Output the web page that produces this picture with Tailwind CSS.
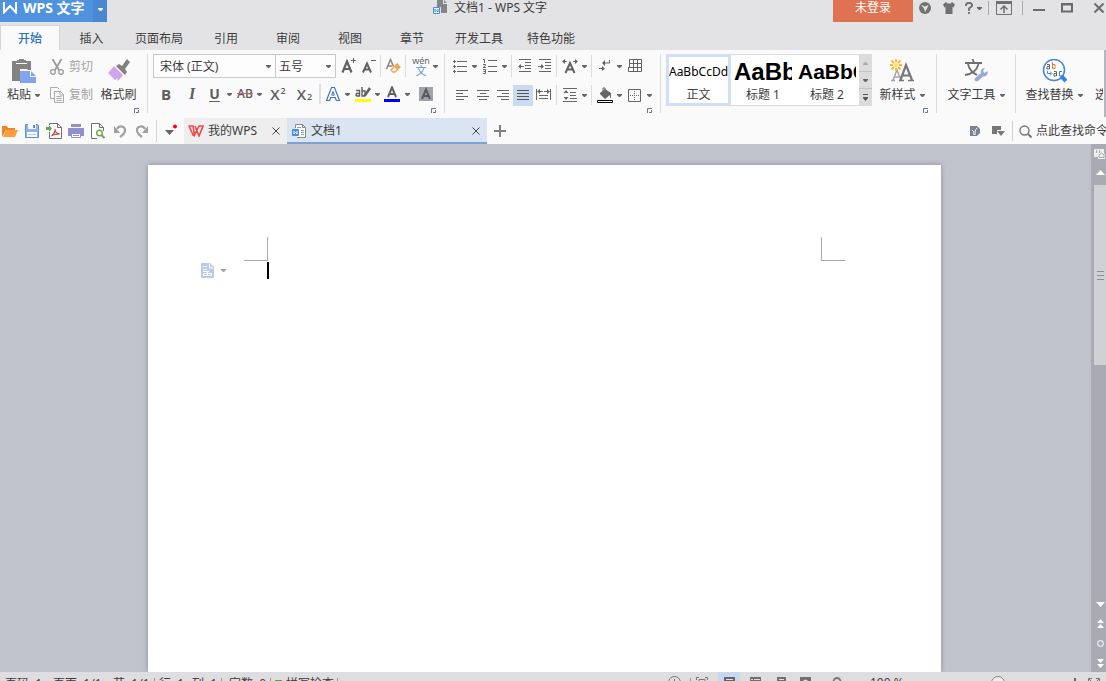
<!DOCTYPE html>
<html lang="zh-CN">
<head>
<meta charset="utf-8">
<title>文档1 - WPS 文字</title>
<script src="https://cdn.jsdelivr.net/npm/@tailwindcss/browser@4"></script>
</head>
<body class="flex h-screen flex-col overflow-hidden bg-[#e3e3e5] font-['Noto_Sans','Noto_Sans_CJK_SC',sans-serif] text-xs leading-4 text-[#3c3c3c]">
<svg class="hidden">
  <symbol id="caret" viewBox="0 0 5 3"><path d="M0 0h5v1L3 3H2L0 1z" fill="#666"/></symbol>
  <symbol id="launch" viewBox="0 0 5 5"><path d="M.5 5V.5H5M4.500 2v2.500H2" fill="none" stroke="#6b7590"/></symbol>
  <symbol id="close" viewBox="0 0 8 8"><path d="M.5.5l7 7M7.500.5l-7 7" fill="none" stroke="#444"/></symbol>
</svg>

<!-- Title bar -->
<header class="flex h-[25px] shrink-0 items-start">
  <div class="flex h-[22px] w-[107px] shrink-0 bg-[#4e92e0] text-white">
    <button class="flex h-4 flex-1 items-center pl-[3px] text-sm font-bold whitespace-nowrap" aria-label="WPS 文字">
      <svg class="mr-1.5 h-3 w-3.5" viewBox="0 0 14 12"><path d="M1 0v10.500L7 4l6 6.500V0" fill="none" stroke="#fff" stroke-width="2"/></svg>WPS 文字
    </button>
    <button class="flex w-3.5 justify-center bg-[#4a86d2] pt-2" aria-label="菜单"><svg class="h-[3px] w-[5px]" viewBox="0 0 5 3"><path d="M0 0h5v1L3 3H2L0 1z" fill="#fff"/></svg></button>
  </div>
  <div class="ml-[326px] flex h-4 items-center gap-[7px] whitespace-nowrap">
    <svg class="h-4 w-3.5" viewBox="0 0 14 16"><path d="M4 0h6v4h4v9H8V7H4zM11 0l3 3h-3z" fill="#858585"/><path d="M.5 7.500h6v6h-6z" fill="#e8f0fb" stroke="#4a8ee0"/><path d="M2 9v3l1.500-1.500L5 12V9" fill="none" stroke="#4a8ee0"/></svg>
    <span>文档1 - WPS 文字</span>
  </div>
  <div class="ml-auto flex shrink-0 items-start">
    <button class="h-[22px] w-20 bg-[#df7252] pb-1.5 text-white">未登录</button>
    <div class="flex h-4 items-center">
      <button class="flex w-6 justify-center" aria-label="皮肤"><svg class="h-3 w-3" viewBox="0 0 12 12"><circle cx="6" cy="6" r="6" fill="#737373"/><path d="M2 3l4 1.500L9.500 3 8 6.500 6 10 5 6.500z" fill="#e3e3e5"/></svg></button>
      <button class="flex w-6 justify-center" aria-label="换装"><svg class="h-3 w-3" viewBox="0 0 12 12"><path d="M3 0l1.500 1.500h3L9 0l3 2.500L10.500 5.500 9.500 5v7h-7V5l-1 .5L0 2.500z" fill="#707070"/></svg></button>
      <button class="flex w-6 items-center justify-center gap-1" aria-label="帮助"><svg class="h-3 w-2" viewBox="0 0 8 12"><path d="M1 4V2.500L2.500 1h3L7 2.500v1.500L4 6.500V9M4 10v2" fill="none" stroke="#737373" stroke-width="1.900"/></svg><svg class="h-[3px] w-[5px]"><use href="#caret"/></svg></button>
      <span class="mr-1 ml-[3px] h-3.5 w-px bg-[#aaa]"></span>
      <button class="flex w-[22px] justify-center" aria-label="收起功能区"><svg class="h-4 w-4" viewBox="0 0 16 16"><path d="M.5 1.500h15v13H.5z" fill="none" stroke="#707070"/><path d="M0 1h16v3H0z" fill="#707070"/><path d="M8 13V7M4.500 9.500L8 6l3.500 3.500" fill="none" stroke="#707070" stroke-width="1.500"/></svg></button>
      <span class="ml-[7px] h-3.5 w-px bg-[#aaa]"></span>
      <button class="flex w-8 justify-center" aria-label="最小化"><svg class="h-3 w-3" viewBox="0 0 12 12"><path d="M0 8h12" stroke="#6b6b6b" stroke-width="2"/></svg></button>
      <button class="flex w-6 justify-center" aria-label="最大化"><svg class="h-3 w-3" viewBox="0 0 12 12"><path d="M1 2.500h10v7H1z" fill="none" stroke="#6b6b6b" stroke-width="2"/><path d="M0 1h12v2H0z" fill="#6b6b6b"/></svg></button>
      <button class="mr-[3px] ml-[15px] flex w-[9px] justify-center" aria-label="关闭"><svg class="h-2.5 w-2.5 shrink-0" viewBox="0 0 10 10"><path d="M.5.5l9 9M9.500.5l-9 9" stroke="#6b6b6b" stroke-width="2"/></svg></button>
    </div>
  </div>
</header>

<!-- Ribbon tabs -->
<nav class="flex h-[25px] shrink-0 items-stretch whitespace-nowrap">
  <button class="w-[60px] border border-b-0 border-[#d4d4d6] bg-[#fafafa] pt-px font-medium text-[#2f74bb]">开始</button>
  <button class="w-[63px] pt-0.5">插入</button>
  <button class="w-[72px] pt-0.5">页面布局</button>
  <button class="w-[62px] pt-0.5">引用</button>
  <button class="w-[62px] pt-0.5">审阅</button>
  <button class="w-[62px] pt-0.5">视图</button>
  <button class="w-[62px] pt-0.5">章节</button>
  <button class="w-[72px] pt-0.5">开发工具</button>
  <button class="w-[72px] pt-0.5">特色功能</button>
</nav>

<!-- Ribbon -->
<section class="flex h-[68px] shrink-0 overflow-hidden bg-[#fafafa] pt-1 whitespace-nowrap">
  <!-- Clipboard -->
  <div class="flex h-[59px] w-[148px] shrink-0 border-r border-[#dcdcde]">
    <button class="flex w-[47px] flex-col items-center pt-[5px]" aria-label="粘贴">
      <svg class="h-6 w-6" viewBox="0 0 24 24"><path d="M0 2h5V1h2V0h5v1h2v1h5v9h-3l-1-1H8v12H0z" fill="#838383"/><path d="M4 4h11v1H4z" fill="#fafafa"/><path d="M8 12h10v6h6v6H8z" fill="#80a5ec"/><path d="M19 12v5h5z" fill="#80a5ec"/></svg>
      <span class="mt-1 flex items-center gap-1">粘贴<svg class="h-[3px] w-[5px]"><use href="#caret"/></svg></span>
    </button>
    <div class="flex w-[47px] flex-col gap-3 pt-[5px] pl-[3px] text-[#a3a3a3]">
      <button class="flex h-4 items-center gap-[5px]"><svg class="h-4 w-3.5 shrink-0" viewBox="0 0 14 16"><path d="M2.500 0l6.500 11M11.500 0L5 11" stroke="#9a9a9a" stroke-width="1.800"/><circle cx="3" cy="13" r="2.300" fill="none" stroke="#9a9a9a" stroke-width="1.300"/><circle cx="11" cy="13" r="2.300" fill="none" stroke="#9a9a9a" stroke-width="1.300"/></svg>剪切</button>
      <button class="flex h-4 items-center gap-[5px]"><svg class="h-4 w-3.5 shrink-0" viewBox="0 0 14 16"><path d="M4 11.500H.5V.5h7L9 2M4.500 4.500h6l3 3v8h-9zM10 4.500V8h3.500M6.500 9.500h5M6.500 11.500h5M6.500 13.500h5" fill="none" stroke="#ababab"/></svg>复制</button>
    </div>
    <button class="flex w-[49px] flex-col items-center pt-[5px]" aria-label="格式刷">
      <svg class="h-6 w-6" viewBox="0 0 24 24"><path d="M9 7l3-2 3 2 5-7 3 3-5 7 2 3-2 3z" fill="#808080"/><path d="M7 7l9 9-3 4-3 2 1-3-3 2-7-7z" fill="#cfa6ee"/></svg>
      <span class="mt-1">格式刷</span>
    </button>
    <button class="mt-auto -ml-[9px]" aria-label="剪贴板设置"><svg class="h-[5px] w-[5px]"><use href="#launch"/></svg></button>
  </div>

  <!-- Font -->
  <div class="flex h-[59px] w-[297px] shrink-0 flex-col border-r border-[#dcdcde] pl-[5px]">
    <div class="flex h-6 items-center">
      <label class="flex h-6 w-[123px] items-center border border-[#c9c9cb] bg-[#fdfdfd] pr-1"><select aria-label="字体" class="h-full flex-1 appearance-none pt-0.5 pl-1.5 outline-none"><option>宋体 (正文)</option></select><svg class="h-[3px] w-[5px]"><use href="#caret"/></svg></label>
      <label class="flex h-6 w-[60px] items-center border border-l-0 border-[#c9c9cb] bg-[#fdfdfd] pr-1"><select aria-label="字号" class="h-full w-10 flex-1 appearance-none pt-0.5 pl-[3px] outline-none"><option>五号</option></select><svg class="h-[3px] w-[5px]"><use href="#caret"/></svg></label>
      <button class="flex w-[25px] justify-center" aria-label="增大字号"><svg class="h-4 w-4" viewBox="0 0 16 16"><path d="M1.500 14.500L6 3.500l4.500 11M3.500 11h5" fill="none" stroke="#626262" stroke-width="2.200"/><path d="M10 2.500h5M12.500 0v5" stroke="#626262"/></svg></button>
      <button class="flex w-4 justify-center" aria-label="减小字号"><svg class="h-4 w-4" viewBox="0 0 16 16"><path d="M2 14.500l4-9 4 9M3.500 11.500h5" fill="none" stroke="#626262" stroke-width="2"/><path d="M10 2.500h5" stroke="#626262"/></svg></button>
      <span class="mx-[3px] h-[22px] w-px bg-[#dcdcde]"></span>
      <button class="flex w-[18px] justify-center" aria-label="清除格式"><svg class="h-4 w-4" viewBox="0 0 16 16"><path d="M1.500 11l4-9.500 3 7M3 8h4" fill="none" stroke="#868686" stroke-width="1.500"/><path d="M6 12l6-6 3 3-5 5H8z" fill="#fff" stroke="#eba34e" stroke-width="1.300"/><path d="M9 9l3.500 3L15 9l-3-3z" fill="#f0a850"/></svg></button>
      <span class="mr-[5px] ml-[3px] h-[22px] w-px bg-[#dcdcde]"></span>
      <button class="flex h-6 w-5 flex-col items-center justify-center text-[9px] leading-[10px] text-[#666]" aria-label="拼音指南"><span class="h-2.5">wén</span><span class="h-2.5 text-[11px] text-[#5e8ddb]">文</span></button>
      <button class="flex w-2 justify-center" aria-label="拼音选项"><svg class="h-[3px] w-[5px]"><use href="#caret"/></svg></button>
    </div>
    <div class="mt-1.5 flex h-5 items-center font-['Open_Sans','Noto_Sans',sans-serif] text-[15px] font-bold text-[#5e5e5e]">
      <button class="w-[26px]">B</button>
      <button class="w-[26px] font-['Liberation_Serif',serif] text-base italic">I</button>
      <button class="w-[19px] text-sm underline decoration-1 underline-offset-2">U</button>
      <button class="flex w-2.5 justify-center" aria-label="下划线选项"><svg class="h-[3px] w-[5px]"><use href="#caret"/></svg></button>
      <button class="w-[22px] text-xs font-semibold line-through decoration-[#e25858] decoration-1">AB</button>
      <button class="flex w-[7px] justify-center" aria-label="删除线选项"><svg class="h-[3px] w-[5px]"><use href="#caret"/></svg></button>
      <button class="flex w-[30px] justify-center gap-px font-semibold" aria-label="上标"><span>X</span><span class="text-[9px] leading-[10px]">2</span></button>
      <button class="flex w-[23px] items-end justify-center gap-px font-semibold" aria-label="下标"><span>X</span><span class="text-[9px] leading-[10px]">2</span></button>
      <span class="mx-[3px] h-5 w-0.5 bg-[#e0e0e2]"></span>
      <button class="flex w-[18px] justify-center" aria-label="文字效果"><svg class="h-4 w-4" viewBox="0 0 16 16"><path d="M6.500 1.500h3l5 13h-3.200l-1-3H5.700l-1 3H1.500z" fill="#fff" stroke="#4472c4" stroke-width="1.200"/><path d="M8 5.500L6.700 9.200h2.600z" fill="#fff" stroke="#4472c4"/></svg></button>
      <button class="flex w-2.5 justify-center" aria-label="文字效果选项"><svg class="h-[3px] w-[5px]"><use href="#caret"/></svg></button>
      <button class="flex w-[21px] justify-center" aria-label="突出显示"><svg class="h-4 w-4" viewBox="0 0 16 16"><path d="M0 13h16v3H0z" fill="#ff0"/><path d="M1 4.500h3.500V10H2L1 9l.5-1.500h3M7 1v9h2l1-2V5L7 5" fill="none" stroke="#606060" stroke-width="1.400"/><path d="M14 1l2 2-5 7-2 1 .5-3z" fill="#606060"/></svg></button>
      <button class="flex w-2 justify-center" aria-label="突出显示选项"><svg class="h-[3px] w-[5px]"><use href="#caret"/></svg></button>
      <button class="flex w-[22px] justify-center" aria-label="字体颜色"><svg class="h-4 w-4" viewBox="0 0 16 16"><path d="M0 13h16v3H0z" fill="#00f"/><path d="M4 11l4-9.500L12 11M5.500 8h5" fill="none" stroke="#626262" stroke-width="2"/></svg></button>
      <button class="flex w-2 justify-center" aria-label="字体颜色选项"><svg class="h-[3px] w-[5px]"><use href="#caret"/></svg></button>
      <button class="flex w-[30px] justify-center" aria-label="字符底纹"><svg class="h-3.5 w-3.5" viewBox="0 0 14 14"><path d="M0 0h14v14H0z" fill="#a0a3ab"/><path d="M3 12l4-9.500L11 12M4.500 9h5" fill="none" stroke="#5a5a5a" stroke-width="2"/></svg></button>
    </div>
    <button class="mt-auto mr-2 self-end" aria-label="字体设置"><svg class="h-[5px] w-[5px]"><use href="#launch"/></svg></button>
  </div>

  <!-- Paragraph -->
  <div class="flex h-[59px] w-[216px] shrink-0 flex-col border-r border-[#dcdcde] pl-[5px]">
    <div class="flex h-6 items-center">
      <button class="flex w-5 justify-center" aria-label="项目符号"><svg class="h-4 w-4" viewBox="0 0 16 16"><path d="M5 3.500h10M5 8.500h10M5 13.500h10M1 3.500h3M2.500 2v3M1 8.500h3M2.500 7v3M1 13.500h3M2.500 12v3" stroke="#666"/></svg></button>
      <button class="flex w-2 justify-center" aria-label="项目符号选项"><svg class="h-[3px] w-[5px]"><use href="#caret"/></svg></button>
      <button class="flex w-[22px] justify-center" aria-label="编号"><svg class="h-4 w-4" viewBox="0 0 16 16"><path d="M7 2.500h9M7 8.500h9M7 13.500h9M2 1.500h1.500V5M2 6.500h2.500v1L2 9.500h3M2 11.500h2.500v4H2M2.500 13.500h2" fill="none" stroke="#666"/></svg></button>
      <button class="flex w-2 justify-center" aria-label="编号选项"><svg class="h-[3px] w-[5px]"><use href="#caret"/></svg></button>
      <span class="mr-1 ml-[3px] h-[22px] w-px bg-[#dcdcde]"></span>
      <button class="flex w-[18px] justify-center" aria-label="减少缩进"><svg class="h-4 w-3.5" viewBox="0 0 14 16"><path d="M1 1.500h12M7 4.500h6M7 7.500h6M7 10.500h6M1 13.500h12M1 8.500h5" stroke="#666"/><path d="M0 8.500L3 6v5z" fill="#666"/></svg></button>
      <button class="ml-0.5 flex w-[18px] justify-center" aria-label="增加缩进"><svg class="h-4 w-3.5" viewBox="0 0 14 16"><path d="M1 1.500h12M7 4.500h6M7 7.500h6M7 10.500h6M1 13.500h12M0 8.500h4" stroke="#666"/><path d="M6 8.500L3 6v5z" fill="#666"/></svg></button>
      <span class="mr-[3px] ml-0.5 h-[22px] w-px bg-[#dcdcde]"></span>
      <button class="flex w-5 justify-center" aria-label="字符缩放"><svg class="h-4 w-4" viewBox="0 0 16 16"><path d="M3.500 15l4.500-10 4.500 10M5.500 11.500h5" fill="none" stroke="#626262" stroke-width="2"/><path d="M1 3.500h4M11 3.500h4" stroke="#626262"/><path d="M0 3.500L3 1v5zM16 3.500L13 1v5z" fill="#626262"/></svg></button>
      <button class="flex w-2 justify-center" aria-label="字符缩放选项"><svg class="h-[3px] w-[5px]"><use href="#caret"/></svg></button>
      <span class="mx-[3px] h-[22px] w-px bg-[#dcdcde]"></span>
      <button class="flex w-5 justify-center" aria-label="显示标记"><svg class="h-4 w-3" viewBox="0 0 12 16"><path d="M10.500 2v3H5M0 10.500h5" fill="none" stroke="#626262"/><path d="M3 5l3-3v6zM6 10.500L3 8v5z" fill="#626262"/></svg></button>
      <button class="flex w-2 justify-center" aria-label="显示标记选项"><svg class="h-[3px] w-[5px]"><use href="#caret"/></svg></button>
      <button class="flex w-6 justify-center" aria-label="表格"><svg class="h-3.5 w-3.5" viewBox="0 0 14 14"><path d="M1.500.5h12v12H.5V9M1.500.5V9M5.500.5v12M9.500.5v12M1.500 4.500h12M0 8.500h13.500" fill="none" stroke="#626262"/></svg></button>
    </div>
    <div class="mt-1.5 flex h-[22px] items-center">
      <button class="flex w-6 justify-center" aria-label="左对齐"><svg class="h-4 w-3" viewBox="0 0 12 16"><path d="M0 3.500h12M0 6.500h7M0 9.500h12M0 12.500h8" stroke="#666"/></svg></button>
      <button class="flex w-[18px] justify-center" aria-label="居中"><svg class="h-4 w-3" viewBox="0 0 12 16"><path d="M0 3.500h12M3 6.500h6M0 9.500h12M2 12.500h8" stroke="#666"/></svg></button>
      <button class="flex w-[22px] justify-center" aria-label="右对齐"><svg class="h-4 w-3" viewBox="0 0 12 16"><path d="M0 3.500h12M5 6.500h7M0 9.500h12M4 12.500h8" stroke="#666"/></svg></button>
      <button class="-ml-px flex h-[21px] w-5 items-center justify-center bg-[#c9daf1]" aria-label="两端对齐"><svg class="h-4 w-3" viewBox="0 0 12 16"><path d="M0 3.500h12M0 6.500h12M0 9.500h12M0 12.500h12" stroke="#555"/></svg></button>
      <button class="flex w-5 justify-center" aria-label="分散对齐"><svg class="h-4 w-4" viewBox="0 0 16 16"><path d="M1.500 2v11M15.500 2v11M3 4.500h11M4 8.500h9M4 11.500h9" stroke="#666"/><path d="M2 4.500L5 2v5zM15 4.500L12 2v5z" fill="#666"/><path d="M8 4h1v1H8z" fill="#fafafa"/></svg></button>
      <span class="mx-[3px] h-5 w-px bg-[#dcdcde]"></span>
      <button class="flex w-5 justify-center" aria-label="行距"><svg class="h-3.5 w-3.5" viewBox="0 0 14 14"><path d="M0 .5h14M7 4.500h6M7 7.500h6M7 10.500h7M0 13.500h14" stroke="#666"/><path d="M3 2l2.500 3h-5zM3 12L.5 9h5z" fill="#666"/></svg></button>
      <button class="flex w-2 justify-center" aria-label="行距选项"><svg class="h-[3px] w-[5px]"><use href="#caret"/></svg></button>
      <span class="mx-[3px] h-5 w-px bg-[#dcdcde]"></span>
      <button class="flex w-5 justify-center" aria-label="底纹颜色"><svg class="h-4 w-4" viewBox="0 0 16 16"><path d="M.5 13.500h15v2H.5z" fill="#fff" stroke="#000"/><path d="M3 6l5-4 6 4v5h-1V8l-5 4-5-5z" fill="#666"/><path d="M6 4V1h2v3" fill="none" stroke="#666"/></svg></button>
      <button class="flex w-2 justify-center" aria-label="底纹选项"><svg class="h-[3px] w-[5px]"><use href="#caret"/></svg></button>
      <button class="flex w-[22px] justify-center" aria-label="边框"><svg class="h-[13px] w-[13px]" viewBox="0 0 13 13"><path d="M.5.5h12v12H.5z" fill="none" stroke="#666"/><path d="M2 6.500h9M6.500 2v9" stroke="#666" stroke-dasharray="1 1"/></svg></button>
      <button class="flex w-2 justify-center" aria-label="边框选项"><svg class="h-[3px] w-[5px]"><use href="#caret"/></svg></button>
    </div>
    <button class="mt-auto mr-2 self-end" aria-label="段落设置"><svg class="h-[5px] w-[5px]"><use href="#launch"/></svg></button>
  </div>

  <!-- Styles -->
  <div class="flex h-[59px] w-[276px] shrink-0 border-r border-[#dcdcde] pl-[5px]">
    <div class="flex h-[52px] w-[206px] border-y border-[#dadada] bg-white">
      <button class="-my-px flex w-[65px] flex-col items-center overflow-hidden border-[3px] border-[#d2def5] text-black"><span class="flex h-[31px] w-full items-center justify-center">AaBbCcDd</span><span class="text-[#444]">正文</span></button>
      <button class="flex w-16 flex-col items-center"><span class="mt-0.5 flex h-[30px] w-[58px] items-center overflow-hidden font-['Liberation_Sans',sans-serif] text-2xl font-bold text-black">AaBbCc</span><span>标题 1</span></button>
      <button class="flex w-16 flex-col items-center"><span class="mt-0.5 flex h-[30px] w-[58px] items-center overflow-hidden font-['Liberation_Sans',sans-serif] text-[21px] font-bold text-black">AaBbCc</span><span>标题 2</span></button>
      <div class="flex flex-1 flex-col gap-px bg-[#c4c4c4]">
        <button class="flex flex-1 items-center justify-center bg-[#dcdcdc]" aria-label="上一行"><svg class="h-[3px] w-[5px]" viewBox="0 0 5 3"><path d="M0 3h5V2L3 0H2L0 2z" fill="#aaa"/></svg></button>
        <button class="flex flex-1 items-center justify-center bg-[#dcdcdc]" aria-label="下一行"><svg class="h-[3px] w-[5px]"><use href="#caret"/></svg></button>
        <button class="flex flex-1 items-center justify-center bg-[#dcdcdc]" aria-label="更多样式"><svg class="h-[7px] w-[5px]" viewBox="0 0 5 7"><path d="M0 0h5v1H0zM0 3h5v1L2.500 7 0 4z" fill="#555"/></svg></button>
      </div>
    </div>
    <button class="flex w-[60px] flex-col items-center pt-[5px]" aria-label="新样式">
      <svg class="h-6 w-6" viewBox="0 0 24 24"><path d="M3 21l4-10 4 10M1 21.500h4M4 18h5" fill="none" stroke="#a5a5a5" stroke-width="1.500"/><path d="M10.500 21l5.500-15 6 15M12 16.500h8" fill="none" stroke="#757575" stroke-width="2.200"/><path d="M9 21.500h5M18 21.500h6" stroke="#757575" stroke-width="1.500"/><circle cx="6" cy="6" r="2.500" fill="#fce08a"/><path d="M6 0v3M6 9v3M0 6h3M9 6h3M1.500 1.500L4 4M8 4l2.500-2.500M1.500 10.500L4 8M8 8l2.500 2.500" stroke="#fcb92c" stroke-width="1.800"/></svg>
      <span class="mt-1 flex items-center gap-1">新样式<svg class="h-[3px] w-[5px]"><use href="#caret"/></svg></span>
    </button>
    <button class="mt-auto -ml-[9px]" aria-label="样式设置"><svg class="h-[5px] w-[5px]"><use href="#launch"/></svg></button>
  </div>

  <!-- Text tools -->
  <button class="flex h-[59px] w-[79px] shrink-0 flex-col items-center border-r border-[#dcdcde] pt-[5px]" aria-label="文字工具">
    <svg class="h-6 w-6" viewBox="0 0 24 24"><path d="M1 4h17M8.500 0l1.500 4M4 5c1 5 5 9 9 11M14.500 5C13 11 8 15 1 16" fill="none" stroke="#707070" stroke-width="1.800"/><path d="M11 19l6-5c-1-3 1-5 4-5l-2 3 1.500 2 3-2c1 4-2 6-4.500 5.500L14 22c-3 1-4-1-3-3z" fill="#9aa8d6"/></svg>
    <span class="mt-1 flex items-center gap-1">文字工具<svg class="h-[3px] w-[5px]"><use href="#caret"/></svg></span>
  </button>

  <!-- Find and select -->
  <button class="flex h-[59px] w-[76px] shrink-0 flex-col items-center pt-[5px]" aria-label="查找替换">
    <svg class="h-6 w-[26px]" viewBox="0 0 26 24"><circle cx="13" cy="11" r="10.500" fill="#fff" stroke="#4386d8" stroke-width="1.500"/><path d="M20 17l5 5" stroke="#3b82d8" stroke-width="4"/><g fill="none" stroke="#666"><path d="M6 5.500h2.500V10H6V7.500h2.500"/><path d="M13 12.500h2.500V17H13v-2.500h2.500"/></g><path d="M11.500 3v6.500H14v-4h-2.500" fill="none" stroke="#d57a36"/><path d="M21 12.500h-2.500V17H21M6.500 12v2.500H10M9 12.500l2 2-2 2" fill="none" stroke="#3b82d8"/></svg>
    <span class="mt-1 flex items-center gap-1">查找替换<svg class="h-[3px] w-[5px]"><use href="#caret"/></svg></span>
  </button>
  <button class="flex h-[59px] min-w-0 flex-1 flex-col items-start overflow-hidden pt-[33px] pl-[3px]" aria-label="选择"><span class="w-2 overflow-hidden">选择</span></button>
  <div class="-mt-1 h-[67px] w-0.5 shrink-0 bg-[#b4b7c3]"></div>
</section>

<!-- Quick access and document tabs -->
<section class="flex h-[26px] shrink-0 items-stretch overflow-hidden bg-[#fafafa] whitespace-nowrap">
  <div class="flex w-[156px] shrink-0 items-center gap-1.5 pl-0.5">
    <button aria-label="打开"><svg class="h-4 w-4" viewBox="0 0 16 16"><path d="M0 14V3h5l1 2h7v2H4z" fill="#e8862a"/><path d="M1 14l3-7h12l-3 7z" fill="#ff9d3c"/></svg></button>
    <button aria-label="保存"><svg class="h-4 w-4" viewBox="0 0 16 16"><path d="M1.500 1.500h12l1 1v12h-13z" fill="#8bb4ef" stroke="#5b8fe0"/><path d="M4 1h8v5H4zM3 9h10v5H3z" fill="#fff"/><path d="M9 2h2v3H9z" fill="#5b8fe0"/><path d="M4 11.500h8" stroke="#a9c6f2"/></svg></button>
    <button aria-label="输出为PDF"><svg class="h-4 w-4" viewBox="0 0 16 16"><path d="M3.500 2V.5h8l4 4v11h-12V9M11.500.5v4h4" fill="#fff" stroke="#707070"/><path d="M0 4h3V2l3 3.500L3 9V7H0z" fill="#69a84f"/><path d="M5.500 13c2-1 4-5 3.500-7 0 3 2 5 5 5-3 0-6 0-8.500 2z" fill="none" stroke="#d53f3f" stroke-width="1.200"/></svg></button>
    <button aria-label="打印"><svg class="h-4 w-4" viewBox="0 0 16 16"><path d="M3 1h10v3H3z" fill="#8f90cc"/><path d="M0 5h16v8h-3v-2H3v2H0z" fill="#8f90cc"/><path d="M3.500 10.500h9v4h-9z" fill="#fff" stroke="#8f90cc"/><path d="M5 12.500h6" stroke="#8f90cc"/></svg></button>
    <button aria-label="打印预览"><svg class="h-4 w-4" viewBox="0 0 16 16"><path d="M7 15.500H1.500V.5h8l4 4V8M9.500.5v4h4" fill="#fff" stroke="#707070"/><circle cx="9.500" cy="10" r="2.800" fill="#fff" stroke="#6aa84f" stroke-width="1.400"/><path d="M11.500 12l3 3" stroke="#6aa84f" stroke-width="2"/></svg></button>
    <button aria-label="撤销"><svg class="h-4 w-4" viewBox="0 0 16 16"><path d="M5 6c2-4 8-3 8 1 0 3-2 5-5 7" fill="none" stroke="#a0a0a0" stroke-width="2.200"/><path d="M2 3v7h6z" fill="#a0a0a0"/></svg></button>
    <button aria-label="恢复"><svg class="h-4 w-4" viewBox="0 0 16 16"><path d="M11 6C9 2 3 3 3 7c0 3 2 5 5 7" fill="none" stroke="#a0a0a0" stroke-width="2.200"/><path d="M14 3v7H8z" fill="#a0a0a0"/></svg></button>
  </div>
  <span class="mt-0.5 h-[22px] w-px bg-[#d4d4d6]"></span>
  <button class="flex w-[27px] items-center justify-center" aria-label="自定义快速访问"><svg class="h-3.5 w-3.5" viewBox="0 0 14 14"><path d="M1 6h9L5.500 11z" fill="#666"/><circle cx="11" cy="2.500" r="2" fill="#f00"/></svg></button>
  <div class="flex w-[103px] shrink-0 items-center bg-[#eeeeee] pl-1">
    <button class="flex items-center gap-1" aria-label="我的WPS"><svg class="h-3 w-4" viewBox="0 0 16 12"><path d="M.5 1H5l1.500 9L11 1h4l-4 10L7 1M1 1l4.500 10" fill="none" stroke="#f0484b" stroke-width="1.600"/></svg>我的WPS</button>
    <button class="mr-[7px] ml-auto" aria-label="关闭标签"><svg class="h-2 w-2"><use href="#close"/></svg></button>
  </div>
  <div class="flex w-[200px] shrink-0 items-center border-b-2 border-[#7da2d6] bg-[#dbe5f1] pt-0.5 pl-[5px]">
    <button class="flex items-center gap-[5px]" aria-label="文档1"><svg class="h-3.5 w-3.5" viewBox="0 0 14 14"><path d="M3.500 4V.5h7l3 3v10H5M10.500.5v3h3" fill="#fff" stroke="#888"/><path d="M5 3.500h4M9 6.500h3M9 8.500h3M9 10.500h3" stroke="#999"/><path d="M.5 5.500h6v6h-6z" fill="#4a8ee0" stroke="#4a8ee0"/><path d="M2 7v3l1.500-1.500L5 10V7" fill="none" stroke="#fff"/></svg>文档1</button>
    <button class="mr-[7px] ml-auto" aria-label="关闭文档"><svg class="h-2 w-2"><use href="#close"/></svg></button>
  </div>
  <button class="flex w-[26px] items-center justify-center" aria-label="新建"><svg class="h-3 w-3" viewBox="0 0 12 12"><path d="M6 0v12M0 6h12" stroke="#808080" stroke-width="2"/></svg></button>
  <div class="ml-auto flex shrink-0 items-center">
    <button class="mr-3" aria-label="稻壳"><svg class="h-2.5 w-2.5" viewBox="0 0 10 10"><path d="M0 0h7l3 3v4l-3 3H0z" fill="#7b8294"/><path d="M2 4c2 1 2 3 2 5M7 2C5 4 5 6 5 9" fill="none" stroke="#fafafa"/></svg></button>
    <button class="mr-[7px]" aria-label="标签选项"><svg class="h-3 w-[13px]" viewBox="0 0 13 12"><path d="M0 1h9v4H5v4H0zM5 6h8L9 11z" fill="#777"/></svg></button>
    <span class="h-5 w-px bg-[#d0d0d2]"></span>
    <label class="flex w-[93px] items-center gap-1 overflow-hidden pl-1.5"><svg class="h-[13px] w-[13px] shrink-0" viewBox="0 0 13 13"><circle cx="5.500" cy="5.500" r="4.500" fill="none" stroke="#777" stroke-width="1.400"/><path d="M9 9l3.500 3.500" stroke="#777" stroke-width="2"/></svg><input type="text" aria-label="查找命令" placeholder="点此查找命令" class="w-[78px] shrink-0 outline-none placeholder:text-[#3c3c3c]"></label>
  </div>
</section>

<!-- Document area -->
<main class="flex min-h-0 flex-1 overflow-hidden bg-[#c0c3cc]">
  <div class="flex min-w-0 flex-1 justify-center pt-[21px] pr-0.5">
    <article class="w-[793px] bg-white pt-[72px] shadow-[0_0_5px_#8a8d96]">
      <div class="flex justify-between px-24">
        <div class="h-6 w-6 border-r border-b border-[#a8a8a8]"></div>
        <div class="h-6 w-6 border-b border-l border-[#a8a8a8]"></div>
      </div>
      <div class="mt-px flex h-4 items-center pl-[53px]">
        <button class="flex items-center gap-[7px]" aria-label="段落布局"><svg class="h-[15px] w-[13px]" viewBox="0 0 13 15"><path d="M0 0h9l4 4v11H0z" fill="#b8cbe8"/><path d="M8.500 1v4H12M2 3.500h4M2 6.500h4M2 8.500h6M2.500 10.500h8v2h-8zM6.500 8v5" fill="none" stroke="#fff"/></svg><svg class="h-[3px] w-[5px] opacity-60"><use href="#caret"/></svg></button>
        <span class="ml-[41px] h-[17px] w-0.5 bg-black"></span>
      </div>
    </article>
  </div>
  <aside class="flex w-[15px] shrink-0 flex-col items-end bg-[#a9aab3] pt-[5px]">
    <button class="mr-px" aria-label="标尺"><svg class="h-2.5 w-[11px]" viewBox="0 0 11 10"><path d="M0 0h10v4l1 2v4H4V8H0z" fill="#eee"/><path d="M2.500 1v3M5.500 1v3M5 8.500V6l2.500-2L10 6v2.500z" fill="none" stroke="#a9aab3"/></svg></button>
    <button class="mt-[11px] mr-px" aria-label="向上滚动"><svg class="h-[5px] w-[9px]" viewBox="0 0 9 5"><path d="M0 5h9L4.500 0z" fill="#fff"/></svg></button>
    <div class="mt-[10px] flex h-[180px] w-3 flex-col items-center justify-center gap-[3px] bg-[#d0d1d5]">
      <span class="h-px w-[7px] bg-[#8c8e96]"></span><span class="h-px w-[7px] bg-[#8c8e96]"></span><span class="h-px w-[7px] bg-[#8c8e96]"></span>
    </div>
    <div class="mt-auto mr-px flex flex-col items-center gap-3 pb-1">
      <button aria-label="向下滚动"><svg class="h-[5px] w-[9px]" viewBox="0 0 9 5"><path d="M0 0h9L4.500 5z" fill="#fff"/></svg></button>
      <button aria-label="上一页"><svg class="h-[9px] w-[9px]" viewBox="0 0 9 9"><path d="M1 4h7L4.500 0zM1 9h7L4.500 5z" fill="#fff"/></svg></button>
      <button aria-label="选择浏览对象"><svg class="h-[7px] w-[7px]" viewBox="0 0 7 7"><circle cx="3.500" cy="3.500" r="2.800" fill="none" stroke="#e8e8ea" stroke-width="1.300"/></svg></button>
      <button aria-label="下一页"><svg class="h-[9px] w-[9px]" viewBox="0 0 9 9"><path d="M1 0h7L4.500 4zM1 5h7L4.500 9z" fill="#fff"/></svg></button>
    </div>
  </aside>
</main>

<!-- Status bar -->
<footer class="flex h-[9px] shrink-0 items-start overflow-hidden bg-[#dedee0] whitespace-nowrap">
  <div class="flex h-5 items-center pt-1 pl-[5px]">
    <span class="w-12">页码: 1</span><span class="w-[60px]">页面: 1/1</span><span class="w-[41px]">节: 1/1</span>
    <span class="h-3 w-px bg-[#999]"></span><span class="w-[33px] pl-1">行: 1</span><span class="w-[33px] pl-1">列: 1</span>
    <span class="h-3 w-px bg-[#999]"></span><span class="w-12 pl-[7px]">字数: 0</span>
    <span class="h-3 w-px bg-[#999]"></span><button class="flex w-[66px] items-center gap-1 pl-1"><span class="h-2 w-[7px] bg-[#5aa52f]"></span>拼写检查</button>
    <span class="h-3 w-px bg-[#999]"></span>
  </div>
  <div class="ml-auto flex h-5 w-[438px] shrink-0 items-start">
    <button class="mt-1 w-[22px]" aria-label="历史"><svg class="h-[13px] w-[13px]" viewBox="0 0 13 13"><circle cx="6.500" cy="6.500" r="6" fill="none" stroke="#777"/><path d="M6.500 3v4H9" fill="none" stroke="#777"/></svg></button>
    <span class="mt-1.5 mr-[5px] h-3 w-px bg-[#999]"></span>
    <button class="mt-[5px] w-[22px]" aria-label="全屏显示"><svg class="h-3 w-3" viewBox="0 0 12 12"><path d="M.5 3V.5H3M9 .5h2.500V3M3 2.500h6v8H3zM.5 9v2.500H3M9 11.500h2.500V9" fill="none" stroke="#777"/></svg></button>
    <button class="flex h-5 w-[22px] justify-center bg-[#c7d8f0] pt-[5px]" aria-label="页面视图"><svg class="h-3 w-[11px]" viewBox="0 0 11 12"><path d="M0 0h11v12H0z" fill="#666"/><path d="M2 2.500h7M2 5.500h7" stroke="#dedee0"/></svg></button>
    <button class="ml-2.5 flex w-[27px] pt-[5px]" aria-label="大纲视图"><svg class="h-3 w-[11px]" viewBox="0 0 11 12"><path d="M0 0h11v12H0z" fill="#707070"/><path d="M1 2.500h2M4 2.500h6M4 5.500h6" stroke="#dedee0"/></svg></button>
    <button class="flex w-[23px] pt-[5px]" aria-label="阅读版式"><svg class="h-3 w-[9px]" viewBox="0 0 9 12"><path d="M0 0h9v12H0z" fill="#707070"/><path d="M2 2.500h5M2 5.500h5" stroke="#dedee0"/></svg></button>
    <button class="flex w-8 pt-[5px]" aria-label="Web版式"><svg class="h-3 w-[11px]" viewBox="0 0 11 12"><path d="M0 0h11v12H0z" fill="#707070"/><circle cx="5.500" cy="5" r="2.500" fill="#dedee0"/></svg></button>
    <button class="flex w-[38px] pt-[5px]" aria-label="护眼模式"><svg class="h-3 w-2.5" viewBox="0 0 10 12"><circle cx="5" cy="4.500" r="3.500" fill="none" stroke="#777" stroke-width="1.800"/></svg></button>
    <button class="w-11 pt-[3px] text-left">100 %</button>
    <input type="range" min="0" max="100" value="56" aria-label="显示比例" class="mt-[3px] h-4 w-[152px] appearance-none [&::-webkit-slider-thumb]:h-3.5 [&::-webkit-slider-thumb]:w-3.5 [&::-webkit-slider-thumb]:appearance-none [&::-webkit-slider-thumb]:rounded-full [&::-webkit-slider-thumb]:border [&::-webkit-slider-thumb]:border-[#888] [&::-webkit-slider-thumb]:bg-[#eee]">
    <button class="mt-1.5 ml-1 w-[18px]" aria-label="放大"><svg class="h-2.5 w-2.5" viewBox="0 0 10 10"><path d="M5 0v10M0 5h10" stroke="#666" stroke-width="2"/></svg></button>
    <button class="mt-1.5" aria-label="适合页面"><svg class="h-2.5 w-3" viewBox="0 0 12 10"><path d="M.5 4V.5H4M1 1l3 3M8 .5h3.500V4M11 1L8 4" fill="none" stroke="#777"/></svg></button>
  </div>
</footer>
</body>
</html>
